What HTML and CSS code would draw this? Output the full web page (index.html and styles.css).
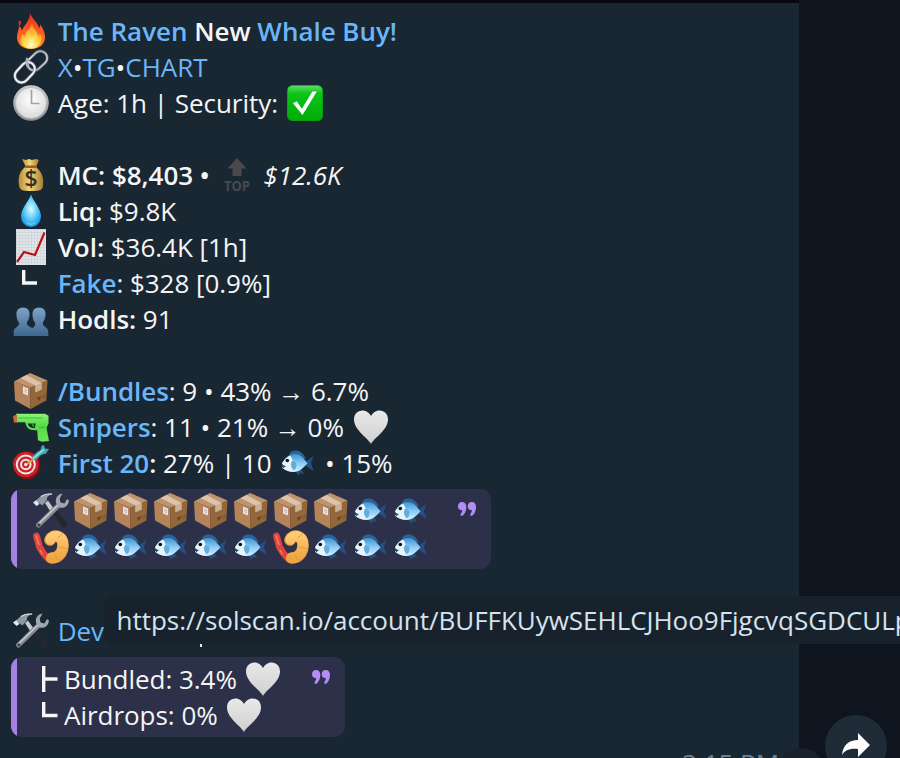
FILE: index.html
```html
<!DOCTYPE html>
<html lang="en">
<head>
<meta charset="utf-8">
<title>Whale Buy</title>
<link rel="stylesheet" href="styles.css">
</head>
<body>
<svg class="defs" width="0" height="0" aria-hidden="true">
  <defs>
    <linearGradient id="gFire" x1="0" y1="0" x2="0" y2="1"><stop offset="0" stop-color="#e8281c"/><stop offset=".5" stop-color="#ff5a22"/><stop offset="1" stop-color="#ff8a1c"/></linearGradient>
    <radialGradient id="gFlame" cx=".5" cy=".85" r=".7"><stop offset="0" stop-color="#fffbd0"/><stop offset=".45" stop-color="#ffd84a"/><stop offset="1" stop-color="#ff9326"/></radialGradient>
    <linearGradient id="gSteel" x1="0" y1="0" x2="1" y2="1"><stop offset="0" stop-color="#f4f6f8"/><stop offset=".5" stop-color="#a3a8b0"/><stop offset="1" stop-color="#d8dbe0"/></linearGradient>
    <radialGradient id="gClock" cx=".5" cy=".4" r=".6"><stop offset="0" stop-color="#fff"/><stop offset="1" stop-color="#dadada"/></radialGradient>
    <linearGradient id="gRim" x1="0" y1="0" x2="0" y2="1"><stop offset="0" stop-color="#c9cdd0"/><stop offset="1" stop-color="#8d9196"/></linearGradient>
    <linearGradient id="gGreen" x1="0" y1="0" x2="0" y2="1"><stop offset="0" stop-color="#5fdc62"/><stop offset=".22" stop-color="#0cc41a"/><stop offset="1" stop-color="#00ad08"/></linearGradient>
    <linearGradient id="gBag" x1="0" y1="0" x2="1" y2="0"><stop offset="0" stop-color="#b98b35"/><stop offset=".45" stop-color="#f2d77c"/><stop offset="1" stop-color="#a97d2e"/></linearGradient>
    <radialGradient id="gDrop" cx=".5" cy=".45" r=".6"><stop offset="0" stop-color="#e2fbff"/><stop offset=".45" stop-color="#6fd4fb"/><stop offset="1" stop-color="#0a8fe4"/></radialGradient>
    <linearGradient id="gPeople" x1="0" y1="0" x2="0" y2="1"><stop offset="0" stop-color="#7ba4c6"/><stop offset="1" stop-color="#3f678f"/></linearGradient>
    <linearGradient id="gHeart" x1="0" y1="0" x2="0" y2="1"><stop offset="0" stop-color="#e9e9e9"/><stop offset="1" stop-color="#cfcfcf"/></linearGradient>
    <linearGradient id="gGun" x1="0" y1="0" x2="0" y2="1"><stop offset="0" stop-color="#8cf575"/><stop offset=".4" stop-color="#56dc48"/><stop offset="1" stop-color="#6be455"/></linearGradient>
    <linearGradient id="gFish" x1="0" y1="0" x2="0" y2="1"><stop offset="0" stop-color="#3f93cf"/><stop offset=".5" stop-color="#86cbf3"/><stop offset="1" stop-color="#d8f1fd"/></linearGradient>
    <linearGradient id="gShrimp" x1="0" y1="0" x2="0" y2="1"><stop offset="0" stop-color="#ffc871"/><stop offset="1" stop-color="#f0a544"/></linearGradient>
    <pattern id="pGrid" width="3" height="3" patternUnits="userSpaceOnUse"><rect width="3" height="3" fill="#e1e5e9"/><path d="M0 .5H3M.5 0V3" stroke="#cbd2d9" stroke-width=".7"/></pattern>
  </defs>

  <symbol id="fire" viewBox="0 0 36 36">
    <path d="M17 0c1 5 8 9 9 15 1-1 1.300-2.500 1-4 3 4 5 9 5 13 0 7-5 12-14 12S4 31 4 24c0-4 2-7 2-11 1.600 1 2.500 2.500 3 4.500C11 12 17 8 17 0z" fill="url(#gFire)"/>
    <path d="M6 8c-1 2 0 3 0 5 2-1 2-3 2-5z" fill="#dc3220"/>
    <path d="M19 10c0 5 6 8 6 13 1-.5 2-2 2-3 2 3 2 6 1 9-1.500 4-5 6.700-10 6.700S8 33 7.500 28c-.3-3 1-5 2-7 1 1 1.500 2 2 3 0-6 7-8 7.500-14z" fill="url(#gFlame)"/>
  </symbol>
  <symbol id="link" viewBox="0 0 36 36">
    <g fill="none">
      <rect x="13.500" y="5" width="22" height="13.500" rx="6.700" transform="rotate(-43 24.500 12)" stroke="#5b5e66" stroke-width="3.200"/>
      <rect x="13.500" y="5" width="22" height="13.500" rx="6.700" transform="rotate(-43 24.500 12)" stroke="url(#gSteel)" stroke-width="1.700"/>
      <rect x=".5" y="16.500" width="23" height="13.500" rx="6.700" transform="rotate(-47 12 23.500)" stroke="#777b84" stroke-width="3.200"/>
      <rect x=".5" y="16.500" width="23" height="13.500" rx="6.700" transform="rotate(-47 12 23.500)" stroke="#eff1f4" stroke-width="1.900"/>
      <path d="M14.500 9c-1.500 3.500-1.500 6 1 9" stroke="#aeb3ba" stroke-width="2.600"/>
    </g>
  </symbol>
  <symbol id="clock" viewBox="0 0 36 36">
    <circle cx="18" cy="18" r="17.800" fill="url(#gRim)"/><circle cx="18" cy="18" r="15.500" fill="url(#gClock)" stroke="#aeb1b5" stroke-width=".6"/>
    <path d="M18.500 5v13.500h8" fill="none" stroke="#a2a2a2" stroke-width="1.700"/>
  </symbol>
  <symbol id="check" viewBox="0 0 36 36">
    <rect width="36" height="36" rx="5.500" fill="#079b12"/><rect x=".8" y=".8" width="34.400" height="34.400" rx="5" fill="url(#gGreen)"/>
    <path d="M6 18.200l3.700-1.900 5.200 7.500L25.400 6.500h4.400L15.500 30z" fill="#fff"/>
  </symbol>
  <symbol id="drop" viewBox="0 0 36 36">
    <path d="M18 1.500c3 8 10 14 10 22a10 10.500 0 0 1-20 0c0-8 7-14 10-22z" fill="url(#gDrop)"/>
    <path d="M12 28c2 3 9 4 12 0-2 5-10 5-12 0z" fill="#c1f1ff" opacity=".6"/>
  </symbol>
  <symbol id="chart" viewBox="0 0 36 36">
    <rect x="3" width="30" height="36" fill="url(#pGrid)"/><path d="M4 33l7-10 11 3L31.500 3.500" fill="none" stroke="#bd1016" stroke-width="2.200"/>
  </symbol>
  <symbol id="corner" viewBox="0 0 36 36"><path d="M10.700 5v13H24" fill="none" stroke="#f5f5f5" stroke-width="3.400"/></symbol>
  <symbol id="people" viewBox="0 0 36 36">
    <g fill="url(#gPeople)">
      <path d="M10 6.500c4.500 0 7 3 6.500 7.500-.3 4-1.800 6-2.800 8 0 4 7.300 4 7.300 8v5H.7v-4c0-5 5.600-5 5.600-9-1.700-2-2.600-4-2.800-8C3 9.500 5.500 6.500 10 6.500z"/>
      <path d="M26 6.500c4.500 0 7 3 6.500 7.500-.3 4-1.800 6-2.800 8 0 4 5.600 4 5.600 9v4H21c0-4-1-5-3-7 2-1 4.500-3 4.300-6-1.700-2-2.600-4-2.800-8-.4-4.500 2-7.500 6.500-7.500z"/>
    </g>
  </symbol>
  <symbol id="box" viewBox="0 0 36 36">
    <path d="M1 8.500L17.500 14.500V36L2 27.500z" fill="#b5835a"/><path d="M17.500 14.500L34.500 7.500 33.300 27.500 17.500 36z" fill="#94673b"/>
    <path d="M1 8.500L17 0l17.500 7.500-17 7z" fill="#c2946b"/>
    <path d="M7.500 5L13.500 2 28.500 10v6.500l-6 2.700V12.600z" fill="#dac4ad"/><path d="M22.500 12.600l6-2.600v6.500l-6 2.700z" fill="#cbb093"/>
    <path d="M10 13.500l5 2v7l-5-2z" fill="#e6e4e0"/><path d="M11.500 16.500l2.500 1M11.500 18.500l2 1" stroke="#999" stroke-width=".8"/>
    <path d="M24 25l4-1.500-2 4zM30 22v4M32 21v4" fill="#6b4522" stroke="#6b4522" stroke-width=".6"/>
  </symbol>
  <symbol id="gun" viewBox="0 0 36 36">
    <path d="M3 .8h29l3.500 2V10.500L33.500 15l2.500 13-7 .8-4-1.500-.8-10c-3 0-7 0-9.200-2-2-2-2-4-3-6H3z" fill="url(#gGun)"/>
    <path d="M15 10.500c0 2.500 2 4.500 7 4.500l.5-4.500z" fill="#192734"/><path d="M19 10.500l2 3.500" stroke="#39aa31" stroke-width="1.500"/>
    <path d="M0 3l4-1.500V9.500H1z" fill="#c86b35"/><path d="M5 5h25" stroke="#42bb38" stroke-width="1"/><path d="M26 15l6-1" stroke="#3bb331" stroke-width="1"/>
  </symbol>
  <symbol id="target" viewBox="0 0 36 36">
    <ellipse cx="14" cy="20.500" rx="13.500" ry="14" fill="#7e1117"/><circle cx="12.800" cy="19.500" r="12.800" fill="#cb2229"/><circle cx="12.800" cy="19.500" r="10" fill="#f0e6e3"/><circle cx="12.800" cy="19.500" r="8" fill="#cb2229"/><circle cx="12.800" cy="19.500" r="5.800" fill="#f0e6e3"/><circle cx="12.800" cy="19.500" r="3.700" fill="#c5262c"/><circle cx="12.800" cy="19.500" r="1.700" fill="#f0e6e3"/>
    <path d="M14 19l7-5" stroke="#d9a03c" stroke-width="2"/><path d="M18 13l6-6 3.500-2 1-4L31 0l1 3.500 4 .5-3 4.500-5 1.500-5 5z" fill="#42a6b0"/><path d="M20 13.500l11-9" stroke="#8edde2" stroke-width="1.700"/>
  </symbol>
  <symbol id="heart" viewBox="0 0 36 36">
    <path d="M18 35C15 29 1 21 1 10.500 1 5 4.500 1.500 9.500 1.500c4 0 7 2.500 8.500 5.500 1.500-3 4.500-5.500 8.500-5.500 5 0 8.500 3.500 8.500 9C35 21 21 29 18 35z" fill="url(#gHeart)"/>
  </symbol>
  <symbol id="fish" viewBox="0 0 36 36">
    <path d="M9 9.500C10 6.500 13 5 17 5.500c4 .8 7 3.500 9 8.500z" fill="#29639a"/>
    <path d="M25.500 16.500L33.500 11 31 18l2.500 8-8-5.500z" fill="#234f83"/><path d="M13 25l6 5.500 1-2.500 4 1-2.500-5z" fill="#245079"/>
    <path d="M2 18.500c3-5.500 7-9.500 13-9.500 6 0 9 5 12.500 9.300C23.500 23 19.500 27 13.500 27 9 27 4 24.500 2 22.500l2-1.500z" fill="url(#gFish)"/>
    <path d="M2 18.500c2-3.500 4.500-6.500 8-8 4 4.500 4 12 .5 16.300C7 26 4 24.500 2 22.500l2-1.500z" fill="#e6f4fb"/>
    <path d="M12 16c5-1 6 6 2 9-3-2-4-6-2-9z" fill="#61ace0"/><path d="M2 20l4 1-3 2.500z" fill="#245483"/><circle cx="7.300" cy="15.500" r="1.800" fill="#111"/>
  </symbol>
  <symbol id="tools" viewBox="0 0 36 36">
    <path d="M12 10l3-2.500 7 10-4 2z" fill="#c3c9cf"/>
    <path d="M18 16l4-1 12 15.500-.5 4-4 .5z" fill="#24282e"/>
    <path d="M5.500 32L26 12" stroke="#858a92" stroke-width="5" stroke-linecap="round"/><path d="M6 30.500L25 12" stroke="#c6cad0" stroke-width="1.700"/><circle cx="6" cy="32" r="1.500" fill="#3c4249"/>
    <path d="M29.500.5C24 1.500 21.500 6 23.500 11l3 3.500c5 1.500 9-2 9.500-7L34 6l-2.500 4.500-4-1-.8-4z" fill="#a0a6ae"/>
    <path d="M3.500 7L8 3c4-3 8-3 12-2-4 1-6.500 2.500-6 6l-4.500 5.500L6 10z" fill="#8f99a4"/><path d="M8 3.500c4-2.500 8-2.800 11-2.300" stroke="#dce6ef" stroke-width="1.200" fill="none"/><path d="M0 9.500L3.500 7l3 4L3.500 13z" fill="#e0e8ee"/>
  </symbol>
  <symbol id="shrimp" viewBox="0 0 36 36">
    <path d="M3.500 7l3 11 4 6.500 5 5.500" fill="none" stroke="#e0443a" stroke-width="6.800" stroke-linejoin="round" stroke-linecap="round"/>
    <path d="M3 6l3 10M7 21l2.500 4" stroke="#fa7f70" stroke-width="1.400" fill="none"/>
    <path d="M17 11C20 4.500 30 6 30 16c0 8-5 13-11.500 13" fill="none" stroke="#dd9238" stroke-width="11.600" stroke-linecap="round"/>
    <path d="M17.500 10.500C20 4.500 30 6 30 16c0 8-5 13-11.500 13" fill="none" stroke="url(#gShrimp)" stroke-width="10.600" stroke-linecap="round"/>
    <path d="M25 9l5-5M26 18l9 2M22 26l4 6" fill="none" stroke="#e29a3f" stroke-width="1"/>
  </symbol>
  <symbol id="quote" viewBox="0 0 18 14">
    <path d="M4 0c3 0 4.300 2 4.300 5 0 4.500-2 7.500-4 8.800-1.700.5-2.200-.8-1.600-1.800C3.800 10.500 4.200 9 4.200 8 1.500 8.300 0 6.500 0 4.200 0 1.700 1.500 0 4 0z" fill="#b48cf5"/>
    <path d="M13.700 0c3 0 4.300 2 4.300 5 0 4.500-2 7.500-4 8.800-1.700.5-2.200-.8-1.600-1.800 1.100-1.500 1.500-3 1.500-4-2.700.3-4.200-1.500-4.200-3.800C9.700 1.700 11.200 0 13.700 0z" fill="#b48cf5"/>
  </symbol>
</svg>

<main class="chat">
  <article class="bubble">
    <div class="row"><svg class="ico"><use href="#fire"/></svg><p class="semi"><a>The Raven</a> New <a>Whale Buy!</a></p></div>
    <div class="row"><svg class="ico"><use href="#link"/></svg><p><a>X</a>•<a>TG</a>•<a>CHART</a></p></div>
    <div class="row"><svg class="ico"><use href="#clock"/></svg><p>Age: 1h | Security:</p><svg class="ico"><use href="#check"/></svg></div>
    <div class="row section">
      <svg class="ico" viewBox="0 0 36 36">
        <path d="M12 10C6 15 5 21 6 28c.6 5 3 6 12 6s12-1 12-6c1-7-1-13-7-18z" fill="url(#gBag)"/>
        <path d="M9 2l4 1 3-1 3 1 4-1 3 1-3 7H13z" fill="url(#gBag)"/>
        <rect x="12" y="8.500" width="12" height="2.600" rx="1.300" fill="#9a5f25"/>
        <text x="18" y="29.500" text-anchor="middle" class="bag-sign">$</text>
      </svg>
      <p class="semi">MC: $8,403 •</p>
      <svg class="ico top" viewBox="0 0 36 36">
        <path d="M18 1l9.500 10.500h-5V19h-9v-7.500h-5z" fill="#4a4a4c"/>
        <text x="18" y="33.500" text-anchor="middle" class="top-label" textLength="26" lengthAdjust="spacingAndGlyphs">TOP</text>
      </svg>
      <p><em>$12.6K</em></p>
    </div>
    <div class="row"><svg class="ico"><use href="#drop"/></svg><p><b>Liq:</b> $9.8K</p></div>
    <div class="row"><svg class="ico"><use href="#chart"/></svg><p><b>Vol:</b> $36.4K [1h]</p></div>
    <div class="row"><svg class="ico"><use href="#corner"/></svg><p><a class="semi">Fake</a>: $328 [0.9%]</p></div>
    <div class="row"><svg class="ico"><use href="#people"/></svg><p><b>Hodls:</b> 91</p></div>
    <div class="row section"><svg class="ico"><use href="#box"/></svg><p><a class="semi">/Bundles</a>: 9 • 43% <span class="arrow">→</span> 6.7%</p></div>
    <div class="row"><svg class="ico gun"><use href="#gun"/></svg><p><a class="semi">Snipers</a>: 11 • 21% <span class="arrow">→</span> 0%</p><svg class="ico"><use href="#heart"/></svg></div>
    <div class="row"><svg class="ico"><use href="#target"/></svg><p><b><a>First 20</a>:</b> 27% | 10</p><svg class="ico"><use href="#fish"/></svg><p>• 15%</p></div>

    <section class="quote holders">
      <div class="grid">
        <svg class="ico"><use href="#tools"/></svg><svg class="ico"><use href="#box"/></svg><svg class="ico"><use href="#box"/></svg><svg class="ico"><use href="#box"/></svg><svg class="ico"><use href="#box"/></svg><svg class="ico"><use href="#box"/></svg><svg class="ico"><use href="#box"/></svg><svg class="ico"><use href="#box"/></svg><svg class="ico"><use href="#fish"/></svg><svg class="ico"><use href="#fish"/></svg>
        <svg class="ico"><use href="#shrimp"/></svg><svg class="ico"><use href="#fish"/></svg><svg class="ico"><use href="#fish"/></svg><svg class="ico"><use href="#fish"/></svg><svg class="ico"><use href="#fish"/></svg><svg class="ico"><use href="#fish"/></svg><svg class="ico"><use href="#shrimp"/></svg><svg class="ico"><use href="#fish"/></svg><svg class="ico"><use href="#fish"/></svg><svg class="ico"><use href="#fish"/></svg>
      </div>
      <svg class="mark"><use href="#quote"/></svg>
    </section>

    <div class="row dev"><svg class="ico"><use href="#tools"/></svg><p><a>Dev</a></p></div>

    <section class="quote bundled">
      <div class="lines">
        <div class="line"><svg class="branch" viewBox="0 0 16 36"><path d="M1.700 5v26M1.700 18H15.500" fill="none" stroke="#f5f5f5" stroke-width="3.400"/></svg><p>Bundled: 3.4%</p><svg class="ico"><use href="#heart"/></svg></div>
        <div class="line"><svg class="branch" viewBox="0 0 16 36"><path d="M1.700 5v13.500H15.500" fill="none" stroke="#f5f5f5" stroke-width="3.400"/></svg><p>Airdrops: 0%</p><svg class="ico"><use href="#heart"/></svg></div>
      </div>
      <svg class="mark"><use href="#quote"/></svg>
    </section>
    <time class="time">3:15 PM</time>
  </article>
  <div class="hidden-tail"></div>
  <div class="tooltip">https://solscan.io/account/BUFFKUywSEHLCJHoo9FjgcvqSGDCULp</div>
  <div class="reaction"></div>
  <button class="share" aria-label="Share"><svg viewBox="0 0 28 24"><path d="M16 0l12 12-12 12v-8C8 15 3 17 0 22 1 12 7 7 16 7z" fill="#fff"/></svg></button>
</main>
</body>
</html>
```
FILE: styles.css
```css
* { box-sizing: border-box; }
body { margin: 0; background: #0e151f; }
.defs { position: absolute; }
.chat {
  position: relative;
  width: 900px;
  height: 758px;
  overflow: hidden;
  background: #0e151f;
  font: 400 26px/36px "Open Sans", sans-serif;
  letter-spacing: -0.03px;
  color: #f5f5f5;
}
.bubble {
  width: 799px;
  height: 758px;
  padding: 10px 0 0 13px;
  border-top: 3px solid #090812;
  background: #192733;
  display: flex;
  flex-direction: column;
  overflow: hidden;
}
p { margin: 0; white-space: pre; }
a { color: #6ab6fa; }
b, .semi { font-weight: 600; }
.row { display: flex; gap: 8.7px; height: 36px; flex: none; }
.section { margin-top: 36px; }
.ico { width: 36px; height: 36px; flex: none; display: block; overflow: visible; }
.row .top { margin: 0 -0.5px 0 1px; }
.row .gun { margin-top: 4px; }
.bag-sign { font: 600 23px "Open Sans", sans-serif; fill: #33302a; }
.top-label { font: 700 15px "Open Sans", sans-serif; fill: #4a4a4c; }
.arrow { font-family: "Liberation Serif", serif; line-height: 1; }
.quote {
  display: flex;
  justify-content: space-between;
  flex: none;
  height: 80px;
  margin-left: -2px;
  padding: 4px 15px 4px 16px;
  border-radius: 11px;
  background: linear-gradient(90deg, #a680e2 6px, #2c3049 6px);
}
.holders { width: 480px; margin-top: 8px; padding-left: 22px; }
.bundled { width: 334px; margin-top: 8px; padding-left: 31px; }
.grid { display: grid; grid-template-columns: repeat(10, 36px); column-gap: 4px; }
.mark { width: 18px; height: 14px; margin-top: 9px; }
.line { display: flex; height: 36px; }
.branch { width: 16px; height: 36px; margin-right: 6px; }
.line .ico { margin-left: 8px; }
.dev { margin-top: 44px; }
.time { margin: 8px 20px 0 0; align-self: flex-end; color: #6d7f8f; }
.tooltip {
  position: absolute;
  left: 104px;
  top: 596px;
  width: 820px;
  height: 48px;
  padding: 6px 0 0 12.500px;
  border-radius: 8px;
  background: #17222d;
  color: #d5e3ee;
  white-space: nowrap;
}
.hidden-tail { position: absolute; left: 200px; top: 644px; width: 2px; height: 3px; background: #e8e8e8; }
.reaction { position: absolute; left: 778px; top: 748px; width: 46px; height: 46px; border-radius: 50%; background: #17222c; }
.share {
  position: absolute;
  left: 825px;
  top: 715px;
  width: 62px;
  height: 62px;
  border: 0;
  border-radius: 50%;
  padding: 0 1px 2px 0;
  display: flex;
  align-items: center;
  justify-content: center;
  background: #1f2c38;
}
.share svg { display: block; width: 28px; height: 24px; }
```
